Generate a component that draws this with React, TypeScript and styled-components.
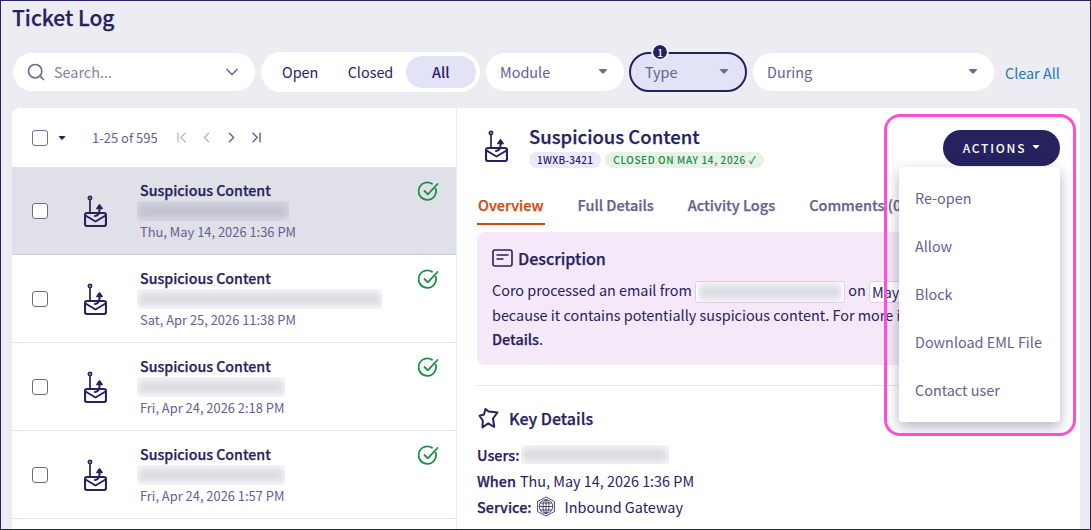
import { createGlobalStyle, css, styled } from 'styled-components';
import { ChevronDown, ChevronFirst, ChevronLast, ChevronLeft, ChevronRight, Search } from 'lucide-react';

const navy = '#26225f';
const muted = '#65618f';

const semibold = css`
	font-weight: 500;
	-webkit-text-stroke: 0.25px currentColor;
`;

const tickets = [
	{ blur: 152, date: 'Thu, May 14, 2026 1:36 PM', selected: true },
	{ blur: 245, date: 'Sat, Apr 25, 2026 11:38 PM', selected: false },
	{ blur: 148, date: 'Fri, Apr 24, 2026 2:18 PM', selected: false },
	{ blur: 148, date: 'Fri, Apr 24, 2026 1:57 PM', selected: false },
];

const menuItems = ['Re-open', 'Allow', 'Block', 'Download EML File', 'Contact user'];

const PhishIcon = () => (
	<svg width="23" height="32" viewBox="0 0 23 32" fill="none" stroke={navy} strokeWidth="1.7" strokeLinecap="round" strokeLinejoin="round">
		<circle cx="6" cy="3" r="1.6" />
		<path d="M6 5v13" />
		<rect x="1" y="18" width="21" height="13" rx="2" strokeWidth="2.2" />
		<path d="M1.5 20.500l10 6 10-6" strokeWidth="2" />
		<path d="M11 21c3-.5 4.500-2.500 4.500-6v-3" strokeWidth="2" />
		<path d="M13 13.500l2.500-3.500 2.500 3.500z" fill={navy} />
	</svg>
);

const DoneIcon = () => (
	<svg width="21" height="21" viewBox="0 0 21 21" fill="none" stroke="#1c8f46" strokeWidth="1.8" strokeLinecap="round" strokeLinejoin="round">
		<path d="M17.600 7.500A8.700 8.700 0 1 1 14 2.800" />
		<path d="M6.500 10l3.300 3.300L19.500 3" />
	</svg>
);

const DescriptionIcon = () => (
	<svg width="21" height="18" viewBox="0 0 21 18" fill="none" stroke={navy} strokeWidth="1.6">
		<rect x="1" y="1" width="19" height="16" rx="2" />
		<path d="M4.500 6h12M4.500 10h7" />
	</svg>
);

const PinIcon = () => (
	<svg width="21" height="22" viewBox="0 0 21 22" fill="none" stroke={navy} strokeWidth="2" strokeLinejoin="round">
		<path d="M7.500 2l3.300 2.600L19.500 5.500l-4.500 6 1.200 8.500-6-3.700L4.500 20.500l.3-7L1.500 8.800 6 7.500z" />
	</svg>
);

const GlobeIcon = () => (
	<svg width="20" height="21" viewBox="0 0 20 21" fill="none" stroke={navy} strokeWidth="0.8">
		<path d="M10 1l8.500 4.500v10L10 20l-8.500-4.500v-10z" />
		<circle cx="10" cy="10.500" r="6.800" />
		<ellipse cx="10" cy="10.500" rx="3" ry="6.800" />
		<path d="M3.200 10.500h13.600M4 7h12M4 14h12M10 3.700v13.600" />
	</svg>
);

const Caret = styled.span<{ $color?: string; $size?: number }>`
	display: inline-block;
	width: 0;
	height: 0;
	border-left: ${({ $size }) => $size || 5}px solid transparent;
	border-right: ${({ $size }) => $size || 5}px solid transparent;
	border-top: ${({ $size }) => $size || 5}px solid ${({ $color }) => $color || '#6f6b97'};
	border-radius: 2px;
`;

const Redacted = ({ width, height = 20 }: { width: number; height?: number }) => (
	<RedactedBox style={{ width, height }}>
		<RedactedBar />
	</RedactedBox>
);

export default function App() {
	return (
		<Page>
			<GlobalStyle />
			<Title>Ticket Log</Title>
			<Toolbar>
				<SearchBox>
					<Search size={20} color="#6f6b97" strokeWidth={2} />
					<SearchText>Search...</SearchText>
					<ChevronDown size={20} color="#6f6b97" strokeWidth={2} />
				</SearchBox>
				<Toggle>
					<ToggleItem>Open</ToggleItem>
					<ToggleItem>Closed</ToggleItem>
					<ToggleItem $active>All</ToggleItem>
				</Toggle>
				<FilterSelect $width={138}>
					Module
					<Caret />
				</FilterSelect>
				<FilterSelect $width={118} $active>
					<FilterBadge>1</FilterBadge>
					Type
					<Caret />
				</FilterSelect>
				<FilterSelect $width={241}>
					During
					<Caret />
				</FilterSelect>
				<ClearAll>Clear All</ClearAll>
			</Toolbar>
			<Panels>
				<ListPanel>
					<ListHeader>
						<Checkbox />
						<HeaderCaret>
							<Caret $color={navy} $size={4} />
						</HeaderCaret>
						<Range>1-25 of 595</Range>
						<Pager>
							<ChevronFirst size={17} color="#b9b7cd" />
							<ChevronLeft size={17} color="#b9b7cd" />
							<ChevronRight size={17} color={muted} />
							<ChevronLast size={17} color={muted} />
						</Pager>
					</ListHeader>
					{tickets.map((ticket) => (
						<Row key={ticket.date} $selected={ticket.selected}>
							<Checkbox />
							<RowIcon>
								<PhishIcon />
							</RowIcon>
							<RowText>
								<RowTitle>Suspicious Content</RowTitle>
								<Redacted width={ticket.blur} />
								<RowDate>{ticket.date}</RowDate>
							</RowText>
							<RowStatus>
								<DoneIcon />
							</RowStatus>
						</Row>
					))}
				</ListPanel>
				<DetailPanel>
					<DetailHeader>
						<PhishIcon />
						<DetailHeading>
							<DetailTitle>Suspicious Content</DetailTitle>
							<Chips>
								<Chip>1WXB-3421</Chip>
								<Chip $done>CLOSED ON MAY 14, 2026 ✓</Chip>
							</Chips>
						</DetailHeading>
						<ActionsButton>
							ACTIONS
							<Caret $color="#fff" $size={4} />
						</ActionsButton>
					</DetailHeader>
					<Tabs>
						<Tab $active>Overview</Tab>
						<Tab>Full Details</Tab>
						<Tab>Activity Logs</Tab>
						<Tab>Comments (0)</Tab>
					</Tabs>
					<DescriptionCard>
						<SectionHeading>
							<DescriptionIcon />
							Description
						</SectionHeading>
						<DescriptionText>
							Coro processed an email from{' '}
							<InlineField>
								<Redacted width={144} height={20} />
							</InlineField>{' '}
							on <InlineField>May 14, 2026 1:36 PM</InlineField>
							<br />
							because it contains potentially suspicious content. For more information, see Full
							<br />
							<b>Details</b>.
						</DescriptionText>
					</DescriptionCard>
					<Divider />
					<KeyHeading>
						<PinIcon />
						Key Details
					</KeyHeading>
					<KeyLine>
						<b>Users:</b>
						<Redacted width={148} height={19} />
					</KeyLine>
					<KeyLine>
						<b>When</b> Thu, May 14, 2026 1:36 PM
					</KeyLine>
					<KeyLine>
						<b>Service:</b>
						<GlobeIcon />
						<ServiceName>Inbound Gateway</ServiceName>
					</KeyLine>
					<ActionsMenu>
						{menuItems.map((item) => (
							<MenuItem key={item}>{item}</MenuItem>
						))}
					</ActionsMenu>
					<Highlight />
				</DetailPanel>
			</Panels>
		</Page>
	);
}

const GlobalStyle = createGlobalStyle`
	html, body {
		margin: 0;
		padding: 0;
	}
	body {
		font-family: "Noto Sans CJK SC", "Noto Sans", sans-serif;
		color: ${navy};
	}
	b {
		${semibold}
	}
`;

const Page = styled.div`
	box-sizing: border-box;
	width: 1091px;
	height: 530px;
	display: flex;
	flex-direction: column;
	padding: 0 10px 0 11px;
	background: #edecf3;
	border: 1px solid ${navy};
	overflow: hidden;
`;

const Title = styled.h1`
	margin: 0;
	height: 34px;
	font-size: 21px;
	line-height: 32px;
	${semibold}
	color: ${navy};
`;

const Toolbar = styled.div`
	display: flex;
	align-items: center;
	height: 40px;
	margin-top: 17px;
	padding-left: 1px;
`;

const SearchBox = styled.div`
	box-sizing: border-box;
	width: 242px;
	height: 38px;
	display: flex;
	align-items: center;
	padding: 0 13px;
	background: #fff;
	border-radius: 19px;
`;

const SearchText = styled.span`
	flex: 1;
	margin: 0 0 2px 8px;
	font-size: 14.4px;
	color: #86839f;
`;

const Toggle = styled.div`
	box-sizing: border-box;
	width: 219px;
	height: 40px;
	margin-left: 6px;
	display: flex;
	align-items: center;
	padding: 4px;
	background: #fff;
	border-radius: 20px;
`;

const ToggleItem = styled.div<{ $active?: boolean }>`
	box-sizing: border-box;
	flex: 1;
	height: 32px;
	display: flex;
	align-items: center;
	justify-content: center;
	padding-bottom: 1px;
	font-size: 14.4px;
	font-weight: ${({ $active }) => ($active ? 500 : 400)};
	color: ${navy};
	background: ${({ $active }) => ($active ? '#e2e3f7' : 'transparent')};
	border-radius: 16px;
`;

const FilterSelect = styled.div<{ $width: number; $active?: boolean }>`
	position: relative;
	box-sizing: border-box;
	width: ${({ $width }) => $width}px;
	height: ${({ $active }) => ($active ? 40 : 38)}px;
	margin-left: ${({ $active }) => ($active ? '5px' : '6px')};
	display: flex;
	align-items: center;
	justify-content: space-between;
	padding: 0 16px 1px 14px;
	font-size: 14.4px;
	color: ${muted};
	background: ${({ $active }) => ($active ? '#e2e3f7' : '#fff')};
	border: ${({ $active }) => ($active ? `2px solid ${navy}` : 'none')};
	border-radius: 20px;
`;

const FilterBadge = styled.span`
	position: absolute;
	top: -9px;
	left: 22px;
	width: 14px;
	height: 14px;
	display: flex;
	align-items: center;
	justify-content: center;
	font-size: 10px;
	font-weight: 500;
	color: #fff;
	background: ${navy};
	border-radius: 50%;
	outline: 2px solid #edecf3;
`;

const ClearAll = styled.a`
	margin-left: 11px;
	font-size: 14.4px;
	color: #1a78b4;
`;

const Panels = styled.div`
	flex: 1;
	display: flex;
	min-height: 0;
	margin-top: 16px;
	gap: 1px;
`;

const ListPanel = styled.div`
	width: 444px;
	background: #fff;
	border-radius: 8px 0 0 0;
	overflow: hidden;
`;

const ListHeader = styled.div`
	height: 59px;
	display: flex;
	align-items: center;
	padding-left: 20px;
`;

const Checkbox = styled.span`
	box-sizing: border-box;
	flex: none;
	width: 16px;
	height: 16px;
	background: #fff;
	border: 1px solid #6f6b97;
	border-radius: 3px;
`;

const HeaderCaret = styled.span`
	display: flex;
	margin-left: 10px;
`;

const Range = styled.span`
	margin-left: 26px;
	font-size: 13px;
	color: ${muted};
`;

const Pager = styled.div`
	display: flex;
	gap: 8px;
	margin-left: 15px;
`;

const Row = styled.div<{ $selected: boolean }>`
	box-sizing: border-box;
	height: 88px;
	display: flex;
	align-items: center;
	padding: 0 17px 0 20px;
	background: ${({ $selected }) => ($selected ? '#e0e0e9' : '#fff')};
	border-bottom: 1px solid ${({ $selected }) => ($selected ? '#cfcfdb' : '#e4e4ec')};
`;

const RowIcon = styled.div`
	box-sizing: border-box;
	width: 92px;
	display: flex;
	justify-content: center;
	padding-left: 2px;
`;

const RowText = styled.div`
	flex: 1;
	margin-left: -4px;
	display: flex;
	flex-direction: column;
	align-self: flex-start;
	padding-top: 13px;
`;

const RowTitle = styled.div`
	height: 21px;
	font-size: 14.2px;
	line-height: 20px;
	${semibold}
	color: ${navy};
	padding-left: 4px;
`;

const RedactedBox = styled.span`
	display: inline-block;
	overflow: hidden;
	vertical-align: middle;
	margin-left: 1px;
`;

const RedactedBar = styled.span`
	display: block;
	height: 16px;
	margin: 2px 0;
	background: rgba(70, 70, 110, 0.2);
	filter: blur(5px);
`;

const RowDate = styled.div`
	height: 20px;
	margin-top: 1px;
	font-size: 12.9px;
	line-height: 20px;
	color: ${muted};
	padding-left: 4px;
`;

const RowStatus = styled.div`
	align-self: flex-start;
	margin-top: 14px;
`;

const DetailPanel = styled.div`
	position: relative;
	flex: 1;
	box-sizing: border-box;
	padding: 22px 20px 0;
	background: #fff;
	border-radius: 0 8px 0 0;
	overflow: hidden;
`;

const DetailHeader = styled.div`
	height: 40px;
	display: flex;
	align-items: flex-start;
	padding-left: 8px;
`;

const DetailHeading = styled.div`
	margin-left: 21px;
	margin-top: -7px;
`;

const DetailTitle = styled.div`
	height: 27px;
	font-size: 18.5px;
	line-height: 26px;
	${semibold}
`;

const Chips = styled.div`
	display: flex;
	gap: 4px;
	margin-top: 2px;
`;

const Chip = styled.span<{ $done?: boolean }>`
	height: 16px;
	padding: 0 8px;
	font-size: 10px;
	line-height: 16px;
	font-weight: 500;
	letter-spacing: ${({ $done }) => ($done ? 0.6 : 0.3)}px;
	white-space: nowrap;
	color: ${({ $done }) => ($done ? '#1a8b44' : navy)};
	background: ${({ $done }) => ($done ? '#e5f3e7' : '#e9e9fb')};
	border-radius: 8px;
`;

const ActionsButton = styled.button`
	box-sizing: border-box;
	width: 117px;
	height: 36px;
	margin-left: auto;
	display: flex;
	align-items: center;
	justify-content: center;
	gap: 6px;
	padding: 0 0 2px;
	font-family: inherit;
	font-size: 12px;
	font-weight: 500;
	letter-spacing: 1.8px;
	color: #fff;
	background: ${navy};
	border: none;
	border-radius: 18px;
`;

const Tabs = styled.div`
	display: flex;
	gap: 32px;
	height: 31px;
	margin-top: 24px;
`;

const Tab = styled.div<{ $active?: boolean }>`
	box-sizing: border-box;
	height: 31px;
	padding: 1px 1px 0;
	font-size: 14.5px;
	line-height: 20px;
	${semibold}
	white-space: nowrap;
	color: ${({ $active }) => ($active ? '#cc4a0c' : muted)};
	border-bottom: ${({ $active }) => ($active ? '2px solid #cc4a0c' : 'none')};
`;

const DescriptionCard = styled.div`
	box-sizing: border-box;
	height: 133px;
	margin-top: 7px;
	padding: 14px 15px;
	background: #f5e9f9;
	border-radius: 8px;
`;

const SectionHeading = styled.div`
	height: 24px;
	display: flex;
	align-items: center;
	gap: 5px;
	font-size: 16px;
	${semibold}
`;

const DescriptionText = styled.div`
	margin-top: 8px;
	font-size: 14.4px;
	line-height: 24px;
	white-space: nowrap;
`;

const InlineField = styled.span`
	display: inline-block;
	height: 22px;
	padding: 0 2px;
	line-height: 20px;
	box-sizing: border-box;
	vertical-align: middle;
	background: #fff;
	border: 1px solid #e2c9f0;
	border-radius: 3px;
	${RedactedBox} {
		margin-left: 0;
		display: block;
	}
`;

const Divider = styled.div`
	height: 1px;
	margin-top: 20px;
	background: #e4e4ec;
`;

const KeyHeading = styled.div`
	height: 24px;
	display: flex;
	align-items: center;
	gap: 10px;
	margin: 20px 0 11px;
	padding-left: 1px;
	font-size: 16px;
	${semibold}
`;

const KeyLine = styled.div`
	height: 26px;
	display: flex;
	align-items: center;
	gap: 4px;
	font-size: 14.4px;
	color: ${navy};
	${RedactedBox} {
		margin-left: -3px;
	}
`;

const ServiceName = styled.span`
	margin-left: 5px;
`;

const ActionsMenu = styled.div`
	position: absolute;
	top: 59px;
	right: 20px;
	box-sizing: border-box;
	width: 161px;
	height: 255px;
	padding: 6px 0 9px;
	background: #fff;
	border-radius: 4px;
	box-shadow: 0 5px 14px rgba(40, 36, 90, 0.35);
`;

const MenuItem = styled.div`
	height: 48px;
	display: flex;
	align-items: center;
	padding-left: 16px;
	font-size: 14.4px;
	color: ${muted};
`;

const Highlight = styled.div`
	position: absolute;
	top: 6px;
	right: 4px;
	box-sizing: border-box;
	width: 192px;
	height: 322px;
	border: 3px solid #ff4fd0;
	border-radius: 16px;
	pointer-events: none;
`;
